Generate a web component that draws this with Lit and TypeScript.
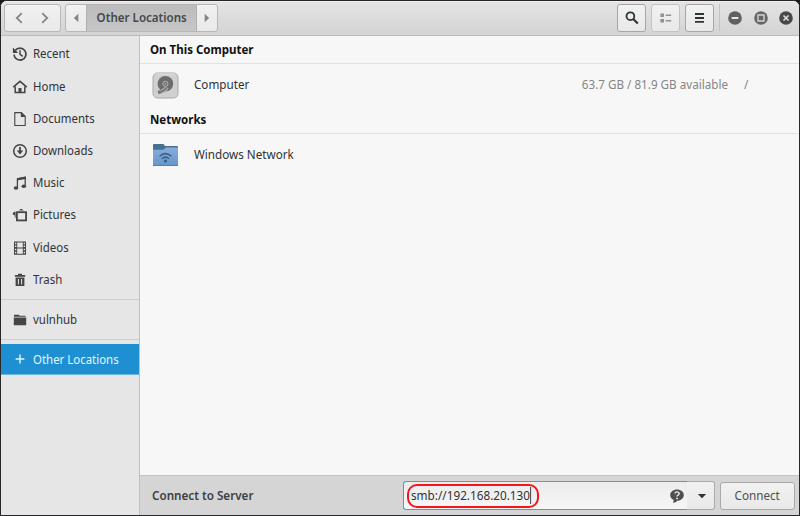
import { LitElement, html, css, svg, TemplateResult } from "lit";
import { customElement } from "lit/decorators.js";
import { classMap } from "lit/directives/class-map.js";

const icon = (body: TemplateResult, size = 16) =>
  html`<svg class="icon" width=${size} height=${size} viewBox="0 0 16 16">${body}</svg>`;

const recent = svg`<path d="M3.2 4.4A6 6 0 1 1 2 8.6" fill="none" stroke="currentColor" stroke-width="1.7"/><path d="M0.9 1.6V7H6.2Z" fill="currentColor"/><path d="M8 4.3V8.4L10.8 10.4" fill="none" stroke="currentColor" stroke-width="1.5"/>`;
const home = svg`<path d="M1.2 8.2L8 2.4L14.8 8.2" fill="none" stroke="currentColor" stroke-width="1.6"/><path d="M3.2 7.6V13.5H12.8V7.6" fill="none" stroke="currentColor" stroke-width="1.5"/><path d="M6.5 9h3v4.5h-3z" fill="currentColor"/>`;
const documents = svg`<path d="M2.8 1.6H9.4L13.2 5.2V14.5H2.8Z" fill="none" stroke="currentColor" stroke-width="1.1"/><path d="M8.8 1.3V6H13.6Z" fill="currentColor"/>`;
const downloads = svg`<circle cx="8" cy="8" r="6.3" fill="none" stroke="currentColor" stroke-width="1.5"/><path d="M8 4V9" stroke="currentColor" stroke-width="1.8"/><path d="M4.7 7.6H11.3L8 11.4Z" fill="currentColor"/>`;
const music = svg`<path d="M5.4 12.5V3.8L13.2 2.2V10.6" fill="none" stroke="currentColor" stroke-width="1.3"/><path d="M5 3.2L13.8 1.4V4L5 5.6Z" fill="currentColor"/><ellipse cx="4" cy="13" rx="2.3" ry="1.7" fill="currentColor"/><ellipse cx="11.8" cy="11.2" rx="2.3" ry="1.7" fill="currentColor"/>`;
const pictures = svg`<rect x="4.9" y="5.2" width="9.2" height="8.2" fill="none" stroke="currentColor" stroke-width="1.8"/><path d="M6.2 3.6Q8 3.4 8.4 2H10Q10.4 3.4 12.4 3.6ZM2.4 4.8H3.6v6H2.8V8.6L0.8 7.6V6Z" fill="currentColor"/>`;
const videos = svg`<path d="M2 1.5h12v13.2H2Z M3 2.8v1.5h1.3V2.8Z M3 5.6v1.5h1.3V5.6Z M3 8.8v1.5h1.3V8.8Z M3 11.8v1.5h1.3v-1.5Z M5.2 2.5V7.5h5.6V2.5Z M5.2 8.6v5.1h5.6V8.6Z M11.7 2.8v1.5h1.3V2.8Z M11.7 5.6v1.5h1.3V5.6Z M11.7 8.8v1.5h1.3V8.8Z M11.7 11.8v1.5h1.3v-1.5Z" fill="currentColor" fill-rule="evenodd"/>`;
const trash = svg`<path d="M3 3H6V1.8h4V3h3.2V4.8H2.8Z" fill="currentColor"/><path d="M3.6 5.6h8.8v8.5h-8.8ZM5.9 7v5.4h1V7ZM9.1 7v5.4h1V7Z" fill="currentColor" fill-rule="evenodd"/>`;
const folder = svg`<path d="M2 2.8h4.8l1 1H13.6V4.7H2Z M1.8 5.4h12.4V13.2H1.8Z" fill="currentColor"/>`;
const plus = svg`<path d="M8 3.6V12.4M3.6 8H12.4" stroke="currentColor" stroke-width="1.4"/>`;

interface Place { label: string; glyph: TemplateResult; kind?: "bookmark" | "selected" }

const places: Place[] = [
  { label: "Recent", glyph: recent },
  { label: "Home", glyph: home },
  { label: "Documents", glyph: documents },
  { label: "Downloads", glyph: downloads },
  { label: "Music", glyph: music },
  { label: "Pictures", glyph: pictures },
  { label: "Videos", glyph: videos },
  { label: "Trash", glyph: trash },
];

@customElement("app-root")
export class AppRoot extends LitElement {
  static styles = css`
    * { box-sizing: border-box; }
    :host {
      display: block; width: 800px; height: 516px; background: #1e191b;
      font: 13px/18px "Noto Sans", "Open Sans", sans-serif; color: #2e3436;
    }
    .window {
      width: 800px; height: 516px; border: 1px solid #2a2528; border-radius: 7px 7px 0 0;
      display: flex; flex-direction: column; overflow: hidden; background: #f7f7f7;
    }
    svg { display: block; flex: none; }
    .t { display: inline-block; white-space: nowrap; padding-bottom: 2px; transform: scaleX(0.897); transform-origin: left center; }
    .header {
      height: 35px; flex: none; display: flex; align-items: flex-start; padding: 3px 6px 0 3px;
      background: linear-gradient(#e4e4e4, #d3d3d3); border-bottom: 1px solid #bcbcbc;
      box-shadow: inset 0 1px #efefef;
    }
    .box {
      height: 28px; border: 1px solid #b7b7b7; border-radius: 3px; display: flex;
      align-items: center; justify-content: center; background: linear-gradient(#f1f1f1, #e9e9e9);
      overflow: hidden; color: #2e3436;
    }
    .history { width: 57px; gap: 10px; color: #858585; padding-right: 2px; }
    .path { width: 153px; margin-left: 4px; color: #858585; justify-content: flex-start; }
    .step { width: 20px; display: flex; justify-content: center; }
    .crumb {
      width: 111px; height: 26px; display: flex; align-items: center; justify-content: center;
      background: linear-gradient(#bcbcbc, #c6c6c6);
      border: solid #b0b0b0; border-width: 0 1px; color: #454848; font-weight: 600;
    }
    .crumb .t { transform-origin: center; transform: scaleX(0.89); }
    .spacer { flex: 1; }
    .tool { width: 29px; margin-right: 5px; border-color: #a6a6a6; }
    .tool.faint { color: #929292; border-color: #c3c3c3; }
    .divider { width: 1px; height: 27px; background: #c5c5c5; margin-right: 8px; }
    .controls { display: flex; gap: 11.5px; height: 28px; align-items: center; }
    .body { flex: 1; min-height: 0; display: flex; }
    .side { width: 139px; background: #e6e6e6; border-right: 1px solid #bfbfbf; padding-top: 2.3px; color: #303436; }
    .place { height: 32.2px; display: flex; align-items: center; padding: 0 0 0 10.5px; gap: 5.5px; }
    .place .icon { color: #454545; }
    .place .t { transform: scaleX(0.88); }
    .rule { height: 1px; background: #cfcfcf; margin-top: 3.1px; }
    .bookmark { height: 39px; padding-top: 1px; }
    .rule.second { margin-top: 0; margin-bottom: 4px; }
    .selected { height: 31px; background: #1e90d2; color: #e4f4ff; border-bottom: 1px solid #69b4e1; }
    .selected .icon { color: #e4f4ff; }
    .selected .t { padding-bottom: 0; }
    .main { flex: 1; display: flex; flex-direction: column; min-width: 0; }
    .heading { height: 28px; line-height: 27px; padding-left: 10px; font-weight: 700; color: #111; border-bottom: 1px solid #e1e1e1; }
    .heading .t { padding-bottom: 0; transform: scaleX(0.885); }
    .location { height: 42px; display: flex; align-items: center; padding-left: 12px; }
    .name { margin-left: 15px; }
    .free { margin-left: auto; color: #858585; }
    .free .t { transform-origin: right center; }
    .mount { width: 55px; margin-left: 16px; color: #858585; }
    .footer {
      height: 40px; flex: none; margin-top: auto; background: #d5d5d5; border-top: 1px solid #c4c4c4;
      display: flex; align-items: center; padding: 0 4px 0 12px;
    }
    .prompt { font-weight: 600; color: #3c4042; }
    .entry {
      width: 284px; height: 29px; margin-left: auto; border: 1px solid #4a9fce; border-right: 0; border-radius: 3px 0 0 3px;
      background: linear-gradient(#ececec, #f6f6f6); display: flex; align-items: center; padding: 0 2px 0 3px;
    }
    .address {
      height: 24px; width: 132px; border: 2px solid #f0161c; border-radius: 10px;
      padding-left: 2px; display: flex; align-items: center;
    }
    .address .t { border-right: 1px solid #333; line-height: 16px; padding-bottom: 1px; transform: scaleX(0.903); }
    .help { margin-left: auto; }
    .drop { width: 28px; height: 29px; border-color: #a9a9a9; border-left: 0; border-radius: 0 3px 3px 0; padding-left: 3px; }
    .connect { width: 75px; margin-left: 5px; border-color: #a9a9a9; color: #4b4f51; }
    .connect .t { transform-origin: center; }
  `;

  private place(p: Place) {
    return html`<div class=${classMap({ place: true, selected: p.kind === "selected", bookmark: p.kind === "bookmark" })}>
      ${icon(p.glyph)}<span class="t">${p.label}</span></div>`;
  }

  private control(mark: TemplateResult, fill: string) {
    return html`<svg width="14" height="14" viewBox="0 0 14 14"><circle cx="7" cy="7" r="6.8" fill=${fill}/>${mark}</svg>`;
  }

  render() {
    return html`<div class="window">
      <div class="header">
        <div class="box history">
          ${icon(svg`<path d="M10.8 3.2L5.8 8L10.8 12.8" fill="none" stroke="currentColor" stroke-width="1.8"/>`)}
          ${icon(svg`<path d="M5.2 3.2L10.2 8L5.2 12.8" fill="none" stroke="currentColor" stroke-width="1.8"/>`)}
        </div>
        <div class="box path">
          <div class="step">${icon(svg`<path d="M10.3 3.8V12.2L5.8 8Z" fill="currentColor"/>`)}</div>
          <div class="crumb"><span class="t">Other Locations</span></div>
          <div class="step">${icon(svg`<path d="M5.7 3.8V12.2L10.2 8Z" fill="currentColor"/>`)}</div>
        </div>
        <div class="spacer"></div>
        <div class="box tool">${icon(svg`<circle cx="6.4" cy="6.2" r="3.9" fill="none" stroke="currentColor" stroke-width="1.8"/><path d="M9.2 9L13.8 13.5" stroke="currentColor" stroke-width="2.2"/>`)}</div>
        <div class="box tool faint">${icon(svg`<path d="M2.4 3.4H6v3.6H2.4zM2.4 9H6v3.6H2.4zM7.6 4.5h5.6v1.5H7.6zM7.6 10.1h5.6v1.5H7.6z" fill="currentColor"/>`)}</div>
        <div class="box tool">${icon(svg`<path d="M3 3.1h9v1.9H3zM3 7h9v1.9H3zM3 10.9h9v1.9H3z" fill="currentColor"/>`)}</div>
        <div class="divider"></div>
        <div class="controls">
          ${this.control(svg`<path d="M3.6 7h6.8" stroke="#e5e5e5" stroke-width="1.8"/>`, "#606060")}
          ${this.control(svg`<path d="M4 4h6v6H4z" fill="none" stroke="#d5d5d5" stroke-width="1.4"/>`, "#666")}
          ${this.control(svg`<path d="M4.5 4.5l5 5M9.5 4.5l-5 5" stroke="#e0e0e0" stroke-width="1.6"/>`, "#484848")}
        </div>
      </div>
      <div class="body">
        <div class="side">
          ${places.map((p) => this.place(p))}
          <div class="rule"></div>
          ${this.place({ label: "vulnhub", glyph: folder, kind: "bookmark" })}
          <div class="rule second"></div>
          ${this.place({ label: "Other Locations", glyph: plus, kind: "selected" })}
        </div>
        <div class="main">
          <div class="heading"><span class="t">On This Computer</span></div>
          <div class="location">
            <svg width="27" height="27" viewBox="0 0 27 27">
              <rect x="1" y="1" width="25" height="25" rx="4.5" fill="#d0d0d0" stroke="#a9a9a9"/>
              <path d="M4 2h19" stroke="#e4e4e4"/>
              <circle cx="13.4" cy="11.8" r="7.8" fill="#6c6c6c"/>
              <circle cx="13.4" cy="11.8" r="2.6" fill="#6c6c6c" stroke="#b4b4b4"/><circle cx="13.4" cy="11.8" r="1" fill="#a4a4a4"/>
              <path d="M6.4 20.6Q12 19.6 15 15.4" fill="none" stroke="#b8b8b8" stroke-width="4"/>
              <path d="M6.6 20.4Q12 19.4 14.8 15.4" fill="none" stroke="#7b7b7b" stroke-width="2.4"/><circle cx="7.4" cy="20" r="1.7" fill="#777"/>
            </svg>
            <span class="name t">Computer</span><span class="free"><span class="t">63.7 GB / 81.9 GB available</span></span><span class="mount"><span class="t">/</span></span>
          </div>
          <div class="heading"><span class="t">Networks</span></div>
          <div class="location">
            <svg width="27" height="24" viewBox="0 0 27 24">
              <defs><linearGradient id="blue" x2="0" y2="1"><stop stop-color="#87acdb"/><stop offset="1" stop-color="#6795cb"/></linearGradient></defs>
              <path d="M1 2q0-1 1-1H11q1 0 1.3 1l.5 1H25q1 0 1 1v6H1Z" fill="#46708f"/>
              <path d="M1 6.7H11.5L14 4.6H26V23H1Z" fill="url(#blue)"/><path d="M1 22.5H26" stroke="#557fae"/>
              <g fill="none" stroke="#375f86" stroke-width="1.5"><path d="M7.6 13.2Q13.5 8.1 19.4 13.2"/><path d="M9.9 15.7Q13.5 12.5 17.1 15.7"/></g>
              <circle cx="13.5" cy="18" r="1.6" fill="#375f86"/>
            </svg>
            <span class="name t">Windows Network</span>
          </div>
          <div class="footer">
            <span class="prompt t">Connect to Server</span>
            <div class="entry">
              <div class="address"><span class="t">smb://192.168.20.130</span></div>
              <svg class="help" width="16" height="16" viewBox="0 0 16 16"><path d="M8 1.5C11.8 1.5 14.8 3.9 14.8 7S11.8 12.8 8.4 12.8Q7 14.6 3.7 14.8Q4.8 13.6 4.6 12Q1.2 10.3 1.2 7C1.2 3.9 4.2 1.5 8 1.5Z" fill="#505050"/><path d="M5.9 5.4Q6.2 3.9 8 3.9T10.2 5.4Q10.2 6.5 9 7.1Q8 7.6 8 8.6" fill="none" stroke="#eee" stroke-width="1.4"/><path d="M7.2 9.7h1.7v1.5H7.2z" fill="#eee"/></svg>
            </div>
            <div class="box drop">${icon(svg`<path d="M3.8 6H12.2L8 10.3Z" fill="currentColor"/>`)}</div>
            <div class="box connect"><span class="t">Connect</span></div>
          </div>
        </div>
      </div>
    </div>`;
  }
}
